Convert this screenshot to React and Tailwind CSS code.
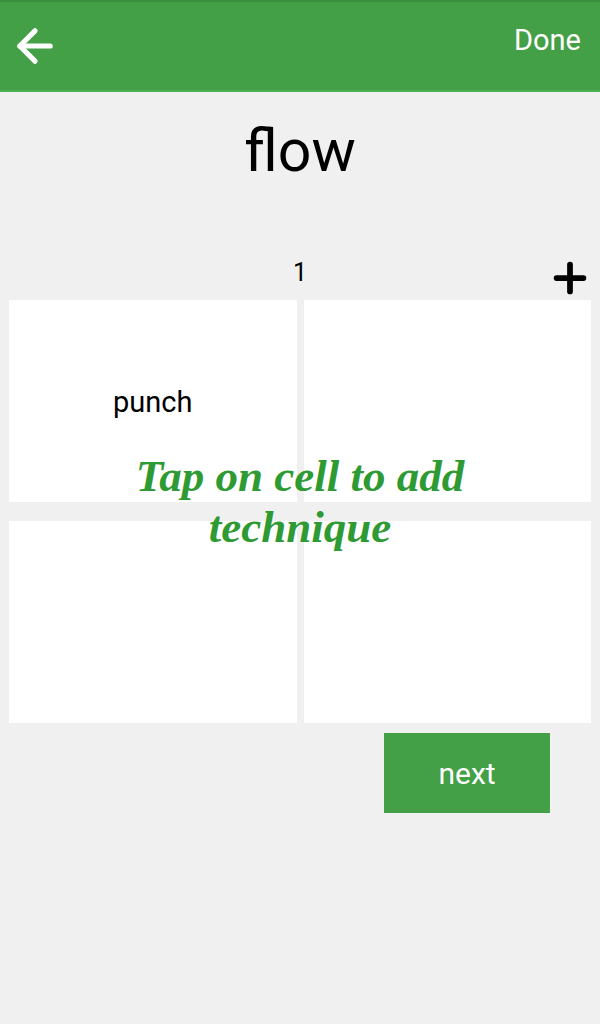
import { ArrowLeft, Plus } from 'lucide-react'

const cells = ['punch', '', '', '']

export default function App() {
  return (
    <div className="relative min-h-[1024px] w-[600px] bg-[#f0f0f0] font-['Roboto',sans-serif]">
      {/* Toolbar */}
      <header className="flex h-[92px] items-center justify-between border-t-2 border-b-2 border-t-[#3d8f40] border-b-[#4caf50] bg-[#43a047] pl-[9px] pr-[19px]">
        <ArrowLeft size={52} strokeWidth={2.4} className="text-white" />
        <span className="mb-[10px] text-[29px] text-white">Done</span>
      </header>

      <h1 className="mt-[24px] text-center text-[59px] leading-[70px] text-black">flow</h1>

      {/* Grid header */}
      <div className="relative mt-[68px] flex h-[38px] items-center justify-center">
        <span className="text-[25px] text-black">1</span>
        <Plus size={46} strokeWidth={3} className="absolute right-[7px] top-[1px] text-black" />
      </div>

      {/* Cells */}
      <div className="relative mx-[9px] mt-[8px] grid grid-cols-2 gap-x-[7px] gap-y-[19px]">
        {cells.map((c, i) => (
          <div key={i} className="flex h-[202px] items-center justify-center bg-white pt-[4px] text-[29px] text-black">
            {c}
          </div>
        ))}
        <p className="pointer-events-none absolute left-0 right-0 top-[151px] text-center font-['Liberation_Serif',serif] text-[45px] font-bold italic leading-[51px] text-[#2e9a33]">
          Tap on cell to add<br />technique
        </p>
      </div>

      <div className="mt-[10px] flex justify-end pr-[50px]">
        <button className="h-[80px] w-[166px] bg-[#43a047] text-[30px] text-white">next</button>
      </div>
    </div>
  )
}
